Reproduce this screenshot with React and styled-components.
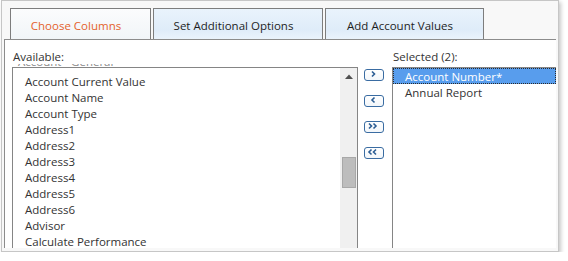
import React from 'react';
import styled, { createGlobalStyle } from 'styled-components';

const GlobalStyle = createGlobalStyle`
  body {
    margin: 0;
    background: #fff;
    font-family: "Open Sans", "Segoe UI", sans-serif;
  }
`;

const Frame = styled.div`
  box-sizing: border-box;
  width: 558px;
  height: 252px;
  margin-left: 1px;
  border: 1px solid #c6c6c6;
  background: #f8f8f8;
  box-shadow: 2px 2px 4px rgba(0, 0, 0, 0.22);
  padding: 7px 2px 3px 2px;
  display: flex;
  flex-direction: column;
  overflow: hidden;
`;

const TabStrip = styled.div`
  display: flex;
  gap: 2px;
  height: 31px;
  padding-left: 6px;
  flex-shrink: 0;
`;

const Tab = styled.div`
  box-sizing: border-box;
  width: ${p => p.w}px;
  border: 1px solid #7d7d7d;
  border-bottom: none;
  background: ${p => p.active
    ? 'linear-gradient(#fbfcfd, #f1f5f8)'
    : 'linear-gradient(#e9f3fc 0%, #dfecf9 70%, #eaf3fc 100%)'};
  color: ${p => p.active ? '#e4622c' : '#1e1e1e'};
  font-size: 11.5px;
  display: flex;
  align-items: center;
  justify-content: center;
  padding: 3px 9px 0 0;
`;

const Content = styled.div`
  flex: 1;
  display: flex;
  background: #fff;
  border-top: 1px solid #8c8c8c;
  border-left: 1px solid #8c8c8c;
  padding-left: 7px;
  overflow: hidden;
  min-height: 0;
`;

const Column = styled.div`
  display: flex;
  flex-direction: column;
  padding-top: 9px;
  width: ${p => p.w ? `${p.w}px` : 'auto'};
  flex: ${p => p.w ? '0 0 auto' : '1'};
  margin-left: ${p => p.ml || 0}px;
  min-height: 0;
`;

const Label = styled.div`
  font-size: 11.5px;
  line-height: 15px;
  color: #333;
  padding-left: 1px;
`;

const PeekStrip = styled.div`
  height: 3px;
  overflow: hidden;
  padding-left: 6px;
  font-size: 11.5px;
  line-height: 16px;
  color: #8a8a8a;
  white-space: nowrap;
`;

const PeekText = styled.div`
  margin-top: -10px;
`;

const ListBox = styled.div`
  flex: 1;
  display: flex;
  border-top: 1px solid #858585;
  border-left: 1px solid #858585;
  border-right: ${p => p.closed ? '1px solid #858585' : 'none'};
  margin-top: ${p => p.mt || 0}px;
  min-height: 0;
  overflow: hidden;
`;

const Items = styled.div`
  flex: 1;
  padding-top: ${p => p.pt || 0}px;
`;

const Item = styled.div`
  box-sizing: border-box;
  height: 16px;
  padding: 1px 0 0 12px;
  line-height: 16px;
  font-size: 11.5px;
  color: #333;
  white-space: nowrap;
`;

const SelectedItem = styled(Item)`
  background: #589ded;
  color: #fff;
  outline: 1px dotted #2a2a2a;
  outline-offset: -1px;
`;

const Scrollbar = styled.div`
  width: 17px;
  background: #f0f0f0;
  display: flex;
  flex-direction: column;
`;

const ArrowCell = styled.div`
  height: 17px;
  display: flex;
  align-items: center;
  justify-content: center;
`;

const Thumb = styled.div`
  box-sizing: border-box;
  height: 31px;
  margin: 72px 1px 0 2px;
  background: #bdbdbd;
  border: 1px solid #a8a8a8;
`;

const ButtonCol = styled.div`
  display: flex;
  flex-direction: column;
  gap: 14px;
  margin-left: 6px;
  padding-top: 29px;
`;

const MoveButton = styled.div`
  box-sizing: border-box;
  width: 20px;
  height: 12px;
  border: 1px solid #3a6ca2;
  border-radius: 3px;
  background: linear-gradient(#ffffff, #f2f6fa);
  display: flex;
`;

const Chevron = ({ dirs }) => (
  <svg width="18" height="10" viewBox="0 0 18 10">
    {dirs.map((d, i) => (
      <polyline
        key={i}
        points={d}
        fill="none"
        stroke="#2b5d94"
        strokeWidth="1.6"
      />
    ))}
  </svg>
);

const available = [
  'Account Current Value',
  'Account Name',
  'Account Type',
  'Address1',
  'Address2',
  'Address3',
  'Address4',
  'Address5',
  'Address6',
  'Advisor',
  'Calculate Performance',
  'Capital Gains',
];

const buttons = [
  ['7,1.5 9.5,4 7,6.5'],
  ['9.5,1.5 7,4 9.5,6.5'],
  ['4,1.5 6.5,4 4,6.5', '8.5,1.5 11,4 8.5,6.5'],
  ['6.5,1.5 4,4 6.5,6.5', '11,1.5 8.5,4 11,6.5'],
];

export default function App() {
  return (
    <>
      <GlobalStyle />
      <Frame>
        <TabStrip>
          <Tab w={141} active>Choose Columns</Tab>
          <Tab w={170}>Set Additional Options</Tab>
          <Tab w={159}>Add Account Values</Tab>
        </TabStrip>
        <Content>
          <Column w={346}>
            <Label>Available:</Label>
            <PeekStrip><PeekText>Account - General</PeekText></PeekStrip>
            <ListBox closed>
              <Items pt={5}>
                {available.map(name => <Item key={name}>{name}</Item>)}
              </Items>
              <Scrollbar>
                <ArrowCell>
                  <svg width="8" height="5" viewBox="0 0 8 5">
                    <polygon points="0,5 4,0.5 8,5" fill="#505050" />
                  </svg>
                </ArrowCell>
                <Thumb />
              </Scrollbar>
            </ListBox>
          </Column>
          <ButtonCol>
            {buttons.map((b, i) => (
              <MoveButton key={i}><Chevron dirs={b} /></MoveButton>
            ))}
          </ButtonCol>
          <Column ml={8}>
            <Label>Selected (2):</Label>
            <ListBox mt={3}>
              <Items>
                <SelectedItem>Account Number*</SelectedItem>
                <Item>Annual Report</Item>
              </Items>
            </ListBox>
          </Column>
        </Content>
      </Frame>
    </>
  );
}
